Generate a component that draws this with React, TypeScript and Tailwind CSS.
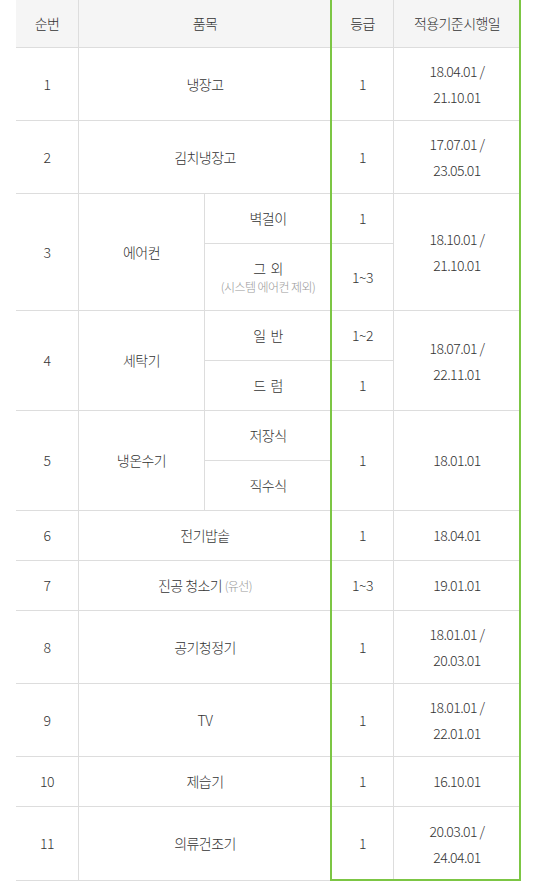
import React from "react";

const font = { fontFamily: '"Noto Sans CJK KR", "Noto Sans", sans-serif' };

const Cell = ({
  className = "",
  children,
}: {
  className?: string;
  children?: React.ReactNode;
}) => (
  <div
    className={
      "flex flex-col items-center justify-center border-b border-[#dddddd] text-center " +
      className
    }
  >
    {children}
  </div>
);

const Date2 = ({ a, b }: { a: string; b: string }) => (
  <div className="leading-[26px]">
    <div>{a} /</div>
    <div>{b}</div>
  </div>
);

const App = () => {
  return (
    <div className="min-h-[891px] bg-white pl-4" style={font}>
      <div className="relative w-[504px] text-[14px] font-light tracking-[-0.04em] text-[#333333]">
        <div className="grid grid-cols-[62px_126px_127px_62px_127px] grid-rows-[48px_73px_73px_50px_67px_50px_50px_50px_50px_50px_50px_73px_73px_50px_74px]">
          {/* header */}
          <Cell className="bg-[#f5f5f5]">순번</Cell>
          <Cell className="col-span-2 border-l bg-[#f5f5f5]">품목</Cell>
          <Cell className="border-l bg-[#f5f5f5]">등급</Cell>
          <Cell className="border-l bg-[#f5f5f5]">적용기준시행일</Cell>

          {/* 1 */}
          <Cell>1</Cell>
          <Cell className="col-span-2 border-l">냉장고</Cell>
          <Cell className="border-l">1</Cell>
          <Cell className="border-l">
            <Date2 a="18.04.01" b="21.10.01" />
          </Cell>

          {/* 2 */}
          <Cell>2</Cell>
          <Cell className="col-span-2 border-l">김치냉장고</Cell>
          <Cell className="border-l">1</Cell>
          <Cell className="border-l">
            <Date2 a="17.07.01" b="23.05.01" />
          </Cell>

          {/* 3 */}
          <Cell className="row-span-2">3</Cell>
          <Cell className="row-span-2 border-l">에어컨</Cell>
          <Cell className="border-l">벽걸이</Cell>
          <Cell className="border-l">1</Cell>
          <Cell className="row-span-2 border-l">
            <Date2 a="18.10.01" b="21.10.01" />
          </Cell>
          <Cell className="border-l">
            <div className="leading-[20px]">그&nbsp; 외</div>
            <div className="text-[12px] leading-[18px] text-[#999999]">(시스템 에어컨 제외)</div>
          </Cell>
          <Cell className="border-l">1~3</Cell>

          {/* 4 */}
          <Cell className="row-span-2">4</Cell>
          <Cell className="row-span-2 border-l">세탁기</Cell>
          <Cell className="border-l">일&nbsp; 반</Cell>
          <Cell className="border-l">1~2</Cell>
          <Cell className="row-span-2 border-l">
            <Date2 a="18.07.01" b="22.11.01" />
          </Cell>
          <Cell className="border-l">드&nbsp; 럼</Cell>
          <Cell className="border-l">1</Cell>

          {/* 5 */}
          <Cell className="row-span-2">5</Cell>
          <Cell className="row-span-2 border-l">냉온수기</Cell>
          <Cell className="border-l">저장식</Cell>
          <Cell className="row-span-2 border-l">1</Cell>
          <Cell className="row-span-2 border-l">18.01.01</Cell>
          <Cell className="border-l">직수식</Cell>

          {/* 6 */}
          <Cell>6</Cell>
          <Cell className="col-span-2 border-l">전기밥솥</Cell>
          <Cell className="border-l">1</Cell>
          <Cell className="border-l">18.04.01</Cell>

          {/* 7 */}
          <Cell>7</Cell>
          <Cell className="col-span-2 border-l">
            <div>
              진공 청소기{" "}
              <span className="text-[12px] text-[#999999]">(유선)</span>
            </div>
          </Cell>
          <Cell className="border-l">1~3</Cell>
          <Cell className="border-l">19.01.01</Cell>

          {/* 8 */}
          <Cell>8</Cell>
          <Cell className="col-span-2 border-l">공기청정기</Cell>
          <Cell className="border-l">1</Cell>
          <Cell className="border-l">
            <Date2 a="18.01.01" b="20.03.01" />
          </Cell>

          {/* 9 */}
          <Cell>9</Cell>
          <Cell className="col-span-2 border-l">TV</Cell>
          <Cell className="border-l">1</Cell>
          <Cell className="border-l">
            <Date2 a="18.01.01" b="22.01.01" />
          </Cell>

          {/* 10 */}
          <Cell>10</Cell>
          <Cell className="col-span-2 border-l">제습기</Cell>
          <Cell className="border-l">1</Cell>
          <Cell className="border-l">16.10.01</Cell>

          {/* 11 */}
          <Cell>11</Cell>
          <Cell className="col-span-2 border-l">의류건조기</Cell>
          <Cell className="border-l">1</Cell>
          <Cell className="border-l">
            <Date2 a="20.03.01" b="24.04.01" />
          </Cell>
        </div>

        {/* highlight box */}
        <div className="pointer-events-none absolute top-[-2px] left-[314px] h-[883px] w-[191px] border-2 border-[#7cc644]" />
      </div>
    </div>
  );
};

export default App;
